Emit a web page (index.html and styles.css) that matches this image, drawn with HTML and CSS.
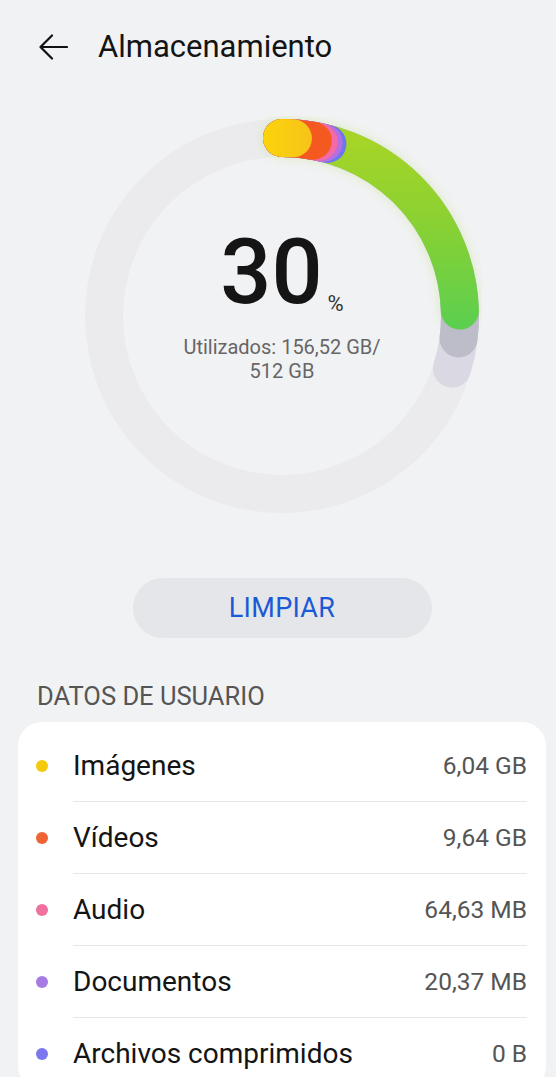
FILE: index.html
```html
<!DOCTYPE html>
<html lang="es">
<head>
  <meta charset="UTF-8">
  <meta name="viewport" content="width=device-width, initial-scale=1.0">
  <title>Almacenamiento</title>
  <link rel="stylesheet" href="styles.css">
</head>
<body>
  <!-- Top bar -->
  <header class="top-bar">
    <svg class="back-icon" width="30" height="28" viewBox="0 0 30 28">
      <path d="M2.5 14H29M14 2.5L2.5 14L14 25.5" fill="none" stroke="#111" stroke-width="2.2" stroke-linecap="round" stroke-linejoin="round"/>
    </svg>
    <h1 class="title">Almacenamiento</h1>
  </header>

  <!-- Storage ring -->
  <section class="hero">
    <div class="ring">
      <svg width="400" height="400" viewBox="0 0 400 400">
        <defs>
          <!-- arcs are drawn rotated -90deg, so gradient axes are in that rotated frame -->
          <linearGradient id="greenGrad" x1="378" y1="0" x2="190" y2="0" gradientUnits="userSpaceOnUse">
            <stop offset="0" stop-color="#a6d527"/>
            <stop offset="0.45" stop-color="#8ad132"/>
            <stop offset="1" stop-color="#5ccf4f"/>
          </linearGradient>
          <linearGradient id="yellowGrad" x1="0" y1="180" x2="0" y2="232" gradientUnits="userSpaceOnUse">
            <stop offset="0" stop-color="#fcd40a"/>
            <stop offset="1" stop-color="#f6c31a"/>
          </linearGradient>
          <filter id="glow" x="-20%" y="-20%" width="140%" height="140%">
            <feGaussianBlur stdDeviation="6"/>
          </filter>
        </defs>
        <circle class="track" cx="200" cy="200" r="178"/>
        <g transform="rotate(-90 200 200)" fill="none" stroke-width="38" stroke-linecap="round">
          <circle cx="200" cy="200" r="178" stroke="#a9d83c" stroke-dasharray="273 2000" opacity="0.3" filter="url(#glow)"/>
          <circle cx="200" cy="200" r="178" stroke="#d9d8e3" stroke-dasharray="333 2000"/>
          <circle cx="200" cy="200" r="178" stroke="#bdbcc9" stroke-dasharray="302 2000"/>
          <circle cx="200" cy="200" r="178" stroke="url(#greenGrad)" stroke-dasharray="274 2000"/>
          <circle cx="200" cy="200" r="178" stroke="#6d78f0" stroke-dasharray="46 2000"/>
          <circle cx="200" cy="200" r="178" stroke="#b56fe0" stroke-dasharray="42 2000"/>
          <circle cx="200" cy="200" r="178" stroke="#f26aa8" stroke-dasharray="37 2000"/>
          <circle cx="200" cy="200" r="178" stroke="#f45a20" stroke-dasharray="31 2000"/>
          <circle cx="200" cy="200" r="178" stroke="url(#yellowGrad)" stroke-dasharray="11 2000"/>
        </g>
      </svg>
      <div class="ring-center">
        <div class="percent">30<span class="percent-sign">%</span></div>
        <p class="used">Utilizados: 156,52 GB/<br>512 GB</p>
      </div>
    </div>

    <button class="clean-btn">LIMPIAR</button>
  </section>

  <!-- User data -->
  <h2 class="section-title">DATOS DE USUARIO</h2>
  <ul class="card">
    <li class="row">
      <span class="dot" style="background: #f5c90c;"></span>
      <div class="row-body"><span class="label">Imágenes</span><span class="value">6,04 GB</span></div>
    </li>
    <li class="row">
      <span class="dot" style="background: #ef6335;"></span>
      <div class="row-body"><span class="label">Vídeos</span><span class="value">9,64 GB</span></div>
    </li>
    <li class="row">
      <span class="dot" style="background: #f0719f;"></span>
      <div class="row-body"><span class="label">Audio</span><span class="value">64,63 MB</span></div>
    </li>
    <li class="row">
      <span class="dot" style="background: #a67be3;"></span>
      <div class="row-body"><span class="label">Documentos</span><span class="value">20,37 MB</span></div>
    </li>
    <li class="row">
      <span class="dot" style="background: #7b78ef;"></span>
      <div class="row-body"><span class="label">Archivos comprimidos</span><span class="value">0 B</span></div>
    </li>
  </ul>
</body>
</html>
```

FILE: styles.css
```css
/* Global Styles */
body {
  margin: 0;
  height: 1077px;
  overflow: hidden;
  background-color: #f1f2f4;
  font-family: Roboto, "Noto Sans", sans-serif;
  color: #111;
}

/* Top Bar */
.top-bar {
  height: 94px;
  padding: 0 38px;
  display: flex;
  align-items: center;
  gap: 30px;
}

.back-icon {
  display: block;
  flex-shrink: 0;
}

.title {
  margin: 0;
  font-size: 31px;
  line-height: 30px;
  font-weight: 400;
  color: #141414;
}

/* Ring + button block, centered on the ring */
.hero {
  padding-left: 8px;
  display: flex;
  flex-direction: column;
  align-items: center;
}

.ring {
  width: 400px;
  height: 400px;
  margin-top: 22px;
  position: relative;
}

.ring svg {
  display: block;
}

.track {
  fill: none;
  stroke: #ebebed;
  stroke-width: 38;
}

.ring-center {
  position: absolute;
  top: 115px;
  left: 0;
  right: 0;
  display: flex;
  flex-direction: column;
  align-items: center;
}

.percent {
  font-size: 90px;
  line-height: 84px;
  font-weight: 500;
  color: #151515;
}

/* sits a little under the digits' baseline */
.percent-sign {
  position: relative;
  top: 8px;
  font-size: 22px;
  font-weight: 400;
  color: #333;
  margin-left: 5px;
}

.used {
  margin: -3px 0 0;
  font-size: 20px;
  line-height: 24px;
  text-align: center;
  color: #666;
}

/* Clean button */
.clean-btn {
  margin-top: 62px;
  width: 299px;
  height: 60px;
  border: none;
  border-radius: 30px;
  background-color: #e5e6e9;
  font-family: Roboto, "Noto Sans", sans-serif;
  font-size: 27px;
  font-weight: 400;
  color: #1b5ad6;
  letter-spacing: 0.3px;
}

/* Section */
.section-title {
  margin: 44px 0 0 37px;
  font-size: 25.5px;
  line-height: 28px;
  font-weight: 400;
  color: #555;
}

.card {
  list-style: none;
  margin: 12px 10px 0 18px;
  padding: 8px 19px 0 18px;
  background-color: #fff;
  border-radius: 24px;
}

.row {
  height: 72px;
  display: flex;
  align-items: center;
}

.dot {
  width: 12px;
  height: 12px;
  border-radius: 50%;
  flex-shrink: 0;
  margin-right: 25px;
}

.row-body {
  flex: 1;
  height: 100%;
  display: flex;
  align-items: center;
  justify-content: space-between;
  border-bottom: 1.5px solid #e6e6e8;
  box-sizing: border-box;
}

.label {
  font-size: 28px;
  color: #141414;
}

.value {
  font-size: 24.5px;
  color: #555;
}
```
